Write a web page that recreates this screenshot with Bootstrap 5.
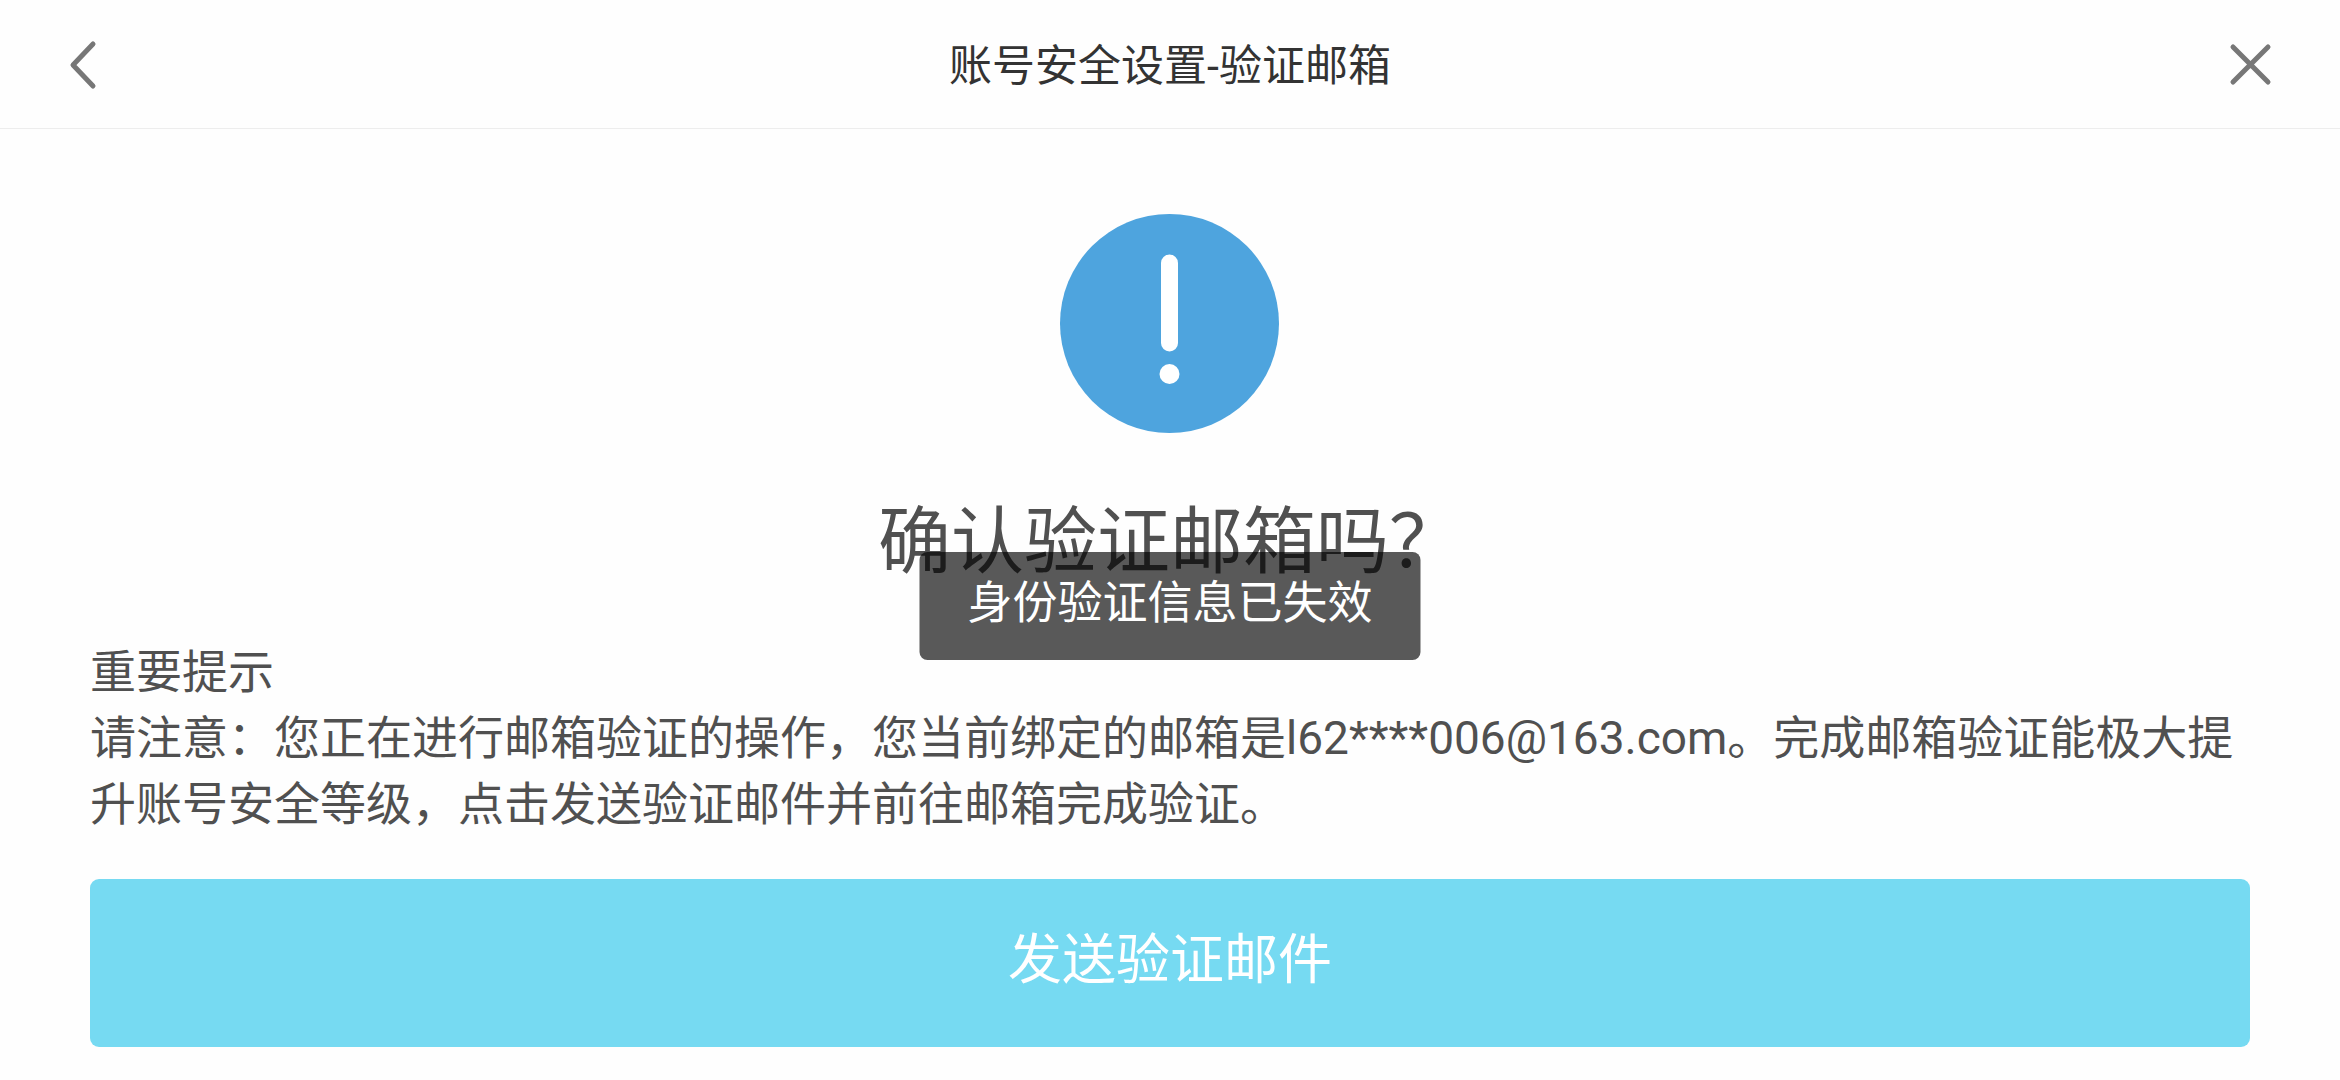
<!DOCTYPE html>
<html lang="zh-CN">
<head>
<meta charset="utf-8">
<meta name="viewport" content="width=device-width, initial-scale=1">
<title>账号安全设置-验证邮箱</title>
<link href="https://cdn.jsdelivr.net/npm/bootstrap@5.3.0/dist/css/bootstrap.min.css" rel="stylesheet">
<style>
body{font-family:Roboto,"Noto Sans CJK SC",sans-serif;color:#505050;background:#fefefe}
.topbar{height:129px;padding:0 60px;border-bottom:1px solid #ededed}
.topbar .btn{width:60px;height:60px;line-height:0}
.page-title{font-size:43px;line-height:60px;padding-top:4px;font-weight:400;color:#333}
.confirm{padding:85px 90px 32px}
.ask{font-size:73px;line-height:96px;margin:60px 0 49px}
.notice{font-size:46px;line-height:66px;margin-bottom:42px}
.send{--bs-btn-color:#fff;--bs-btn-bg:#76daf2;--bs-btn-hover-bg:#62cfe9;--bs-btn-hover-color:#fff;font-size:54px;line-height:80px;padding:42px 0 46px;border:0;border-radius:9px}
.tip{top:552px;font-size:45px;line-height:66px;padding:19px 48px 23px;border-radius:8px;background:rgba(0,0,0,.65)}
</style>
<script src="https://cdn.jsdelivr.net/npm/bootstrap@5.3.0/dist/js/bootstrap.bundle.min.js"></script>
</head>
<body>
<header class="topbar d-flex align-items-center justify-content-between">
  <button type="button" class="btn border-0 p-0" aria-label="返回">
    <svg width="60" height="60" viewBox="0 0 60 60" fill="none" stroke="#777" stroke-width="5" stroke-linecap="round" stroke-linejoin="round"><path d="M33 10 13 31l20 21"/></svg>
  </button>
  <h1 class="page-title mb-0">账号安全设置-验证邮箱</h1>
  <button type="button" class="btn border-0 p-0" aria-label="关闭">
    <svg width="60" height="60" viewBox="0 0 60 60" fill="none" stroke="#777" stroke-width="5" stroke-linecap="round"><path d="M13 13l35 35M48 13 13 48"/></svg>
  </button>
</header>
<main class="confirm">
  <svg class="d-block mx-auto" width="220" height="220" viewBox="0 0 220 220" aria-hidden="true">
    <circle cx="109.5" cy="109.5" r="109.5" fill="#4ea4de"/>
    <path d="M109.500 49v80" stroke="#fff" stroke-width="17" stroke-linecap="round"/>
    <circle cx="109.500" cy="160" r="10" fill="#fff"/>
  </svg>
  <h2 class="ask text-center fw-normal">确认验证邮箱吗？</h2>
  <div class="notice">
    <div>重要提示</div>
    <div>请注意：您正在进行邮箱验证的操作，您当前绑定的邮箱是l62****006@163.com。完成邮箱验证能极大提升账号安全等级，点击发送验证邮件并前往邮箱完成验证。</div>
  </div>
  <button type="button" class="btn send w-100">发送验证邮件</button>
</main>
<div class="tip position-absolute start-50 translate-middle-x text-white text-nowrap" role="status">身份验证信息已失效</div>
</body>
</html>
